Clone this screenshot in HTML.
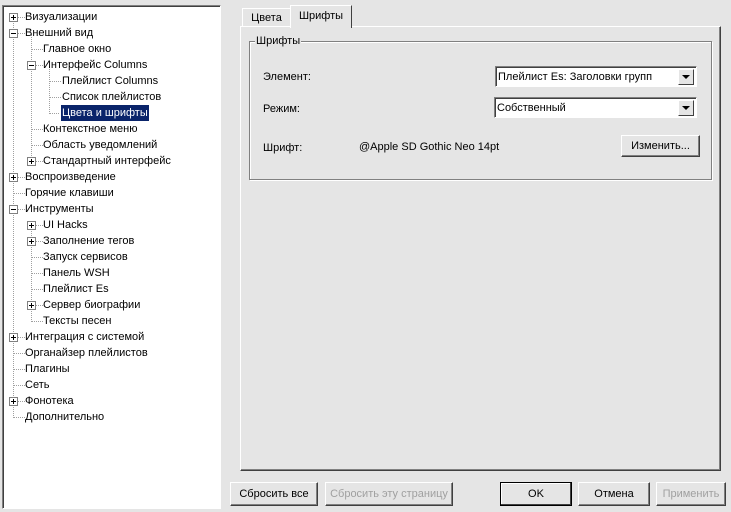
<!DOCTYPE html>
<html><head><meta charset="utf-8"><style>
*{margin:0;padding:0;box-sizing:border-box}
body{width:731px;height:512px;background:#e5e5e5;font:11px "Liberation Sans","DejaVu Sans",sans-serif;color:#000;position:relative;overflow:hidden}
.a{position:absolute;white-space:nowrap}
.tree{left:2px;top:5px;width:219px;height:504px;background:#fff;border:1px solid;border-color:#808080 #fff #fff #808080;box-shadow:inset 1px 1px 0 #404040}
.r{position:absolute;height:16px;line-height:16px}
.pb{position:absolute;width:9px;height:9px;border:1px solid #808080;background:#fff}
.pb:before{content:"";position:absolute;left:1px;top:3px;width:5px;height:1px;background:#000}
.pb.p:after{content:"";position:absolute;left:3px;top:1px;width:1px;height:5px;background:#000}
.v{position:absolute;width:1px;border-left:1px dotted #a0a0a0}
.h{position:absolute;height:1px;border-top:1px dotted #a0a0a0}
.btn{position:absolute;height:24px;border:1px solid;border-color:#fff #404040 #404040 #fff;box-shadow:inset -1px -1px 0 #808080;background:#e5e5e5;text-align:center;line-height:22px}
.dis{color:#a0a0a0}
.cb{position:absolute;height:21px;background:#fff;border:1px solid;border-color:#808080 #fff #fff #808080;box-shadow:inset 1px 1px 0 #404040;padding-left:2px;line-height:20px}
.arr{position:absolute;right:2px;top:2px;width:16px;height:16px;background:#e5e5e5;border:1px solid;border-color:#fff #404040 #404040 #fff}
.arr:after{content:"";position:absolute;left:3px;top:5px;border-left:4px solid transparent;border-right:4px solid transparent;border-top:4px solid #000}
</style></head><body>
<div class="a tree">
 <div class="v" style="left:10px;top:12px;height:400px"></div>
 <div class="v" style="left:28px;top:28px;height:128px"></div>
 <div class="v" style="left:46px;top:60px;height:48px"></div>
 <div class="v" style="left:28px;top:220px;height:96px"></div>
 <div class="h" style="left:10px;top:11px;width:12px"></div><div class="pb p" style="left:6px;top:7px"></div><div class="r" style="left:22px;top:3px">Визуализации</div>
 <div class="h" style="left:10px;top:27px;width:12px"></div><div class="pb" style="left:6px;top:23px"></div><div class="r" style="left:22px;top:19px">Внешний вид</div>
 <div class="h" style="left:28px;top:43px;width:12px"></div><div class="r" style="left:40px;top:35px">Главное окно</div>
 <div class="h" style="left:28px;top:59px;width:12px"></div><div class="pb" style="left:24px;top:55px"></div><div class="r" style="left:40px;top:51px">Интерфейс Columns</div>
 <div class="h" style="left:46px;top:75px;width:12px"></div><div class="r" style="left:59px;top:67px">Плейлист Columns</div>
 <div class="h" style="left:46px;top:91px;width:12px"></div><div class="r" style="left:59px;top:83px">Список плейлистов</div>
 <div class="h" style="left:46px;top:107px;width:12px"></div><div class="r" style="left:58px;top:99px;background:#0a246a;color:#fff;padding:0 1px;outline:1px dotted #fff">Цвета и шрифты</div>
 <div class="h" style="left:28px;top:123px;width:12px"></div><div class="r" style="left:40px;top:115px">Контекстное меню</div>
 <div class="h" style="left:28px;top:139px;width:12px"></div><div class="r" style="left:40px;top:131px">Область уведомлений</div>
 <div class="h" style="left:28px;top:155px;width:12px"></div><div class="pb p" style="left:24px;top:151px"></div><div class="r" style="left:40px;top:147px">Стандартный интерфейс</div>
 <div class="h" style="left:10px;top:171px;width:12px"></div><div class="pb p" style="left:6px;top:167px"></div><div class="r" style="left:22px;top:163px">Воспроизведение</div>
 <div class="h" style="left:10px;top:187px;width:12px"></div><div class="r" style="left:22px;top:179px">Горячие клавиши</div>
 <div class="h" style="left:10px;top:203px;width:12px"></div><div class="pb" style="left:6px;top:199px"></div><div class="r" style="left:22px;top:195px">Инструменты</div>
 <div class="h" style="left:28px;top:219px;width:12px"></div><div class="pb p" style="left:24px;top:215px"></div><div class="r" style="left:40px;top:211px">UI Hacks</div>
 <div class="h" style="left:28px;top:235px;width:12px"></div><div class="pb p" style="left:24px;top:231px"></div><div class="r" style="left:40px;top:227px">Заполнение тегов</div>
 <div class="h" style="left:28px;top:251px;width:12px"></div><div class="r" style="left:40px;top:243px">Запуск сервисов</div>
 <div class="h" style="left:28px;top:267px;width:12px"></div><div class="r" style="left:40px;top:259px">Панель WSH</div>
 <div class="h" style="left:28px;top:283px;width:12px"></div><div class="r" style="left:40px;top:275px">Плейлист Es</div>
 <div class="h" style="left:28px;top:299px;width:12px"></div><div class="pb p" style="left:24px;top:295px"></div><div class="r" style="left:40px;top:291px">Сервер биографии</div>
 <div class="h" style="left:28px;top:315px;width:12px"></div><div class="r" style="left:40px;top:307px">Тексты песен</div>
 <div class="h" style="left:10px;top:331px;width:12px"></div><div class="pb p" style="left:6px;top:327px"></div><div class="r" style="left:22px;top:323px">Интеграция с системой</div>
 <div class="h" style="left:10px;top:347px;width:12px"></div><div class="r" style="left:22px;top:339px">Органайзер плейлистов</div>
 <div class="h" style="left:10px;top:363px;width:12px"></div><div class="r" style="left:22px;top:355px">Плагины</div>
 <div class="h" style="left:10px;top:379px;width:12px"></div><div class="r" style="left:22px;top:371px">Сеть</div>
 <div class="h" style="left:10px;top:395px;width:12px"></div><div class="pb p" style="left:6px;top:391px"></div><div class="r" style="left:22px;top:387px">Фонотека</div>
 <div class="h" style="left:10px;top:411px;width:12px"></div><div class="r" style="left:22px;top:403px">Дополнительно</div>
</div>

<div class="a" style="left:240px;top:26px;width:481px;height:445px;border:1px solid;border-color:#fff #404040 #404040 #fff;box-shadow:inset -1px -1px 0 #808080"></div>
<div class="a" style="left:242px;top:8px;width:49px;height:19px;border:1px solid;border-color:#fff #808080 transparent #fff;border-bottom:none;text-align:center;line-height:19px">Цвета</div>
<div class="a" style="left:290px;top:5px;width:62px;height:23px;border:1px solid;border-color:#fff #404040 transparent #fff;border-bottom:none;background:#e5e5e5;text-align:center;line-height:20px">Шрифты</div>

<div class="a" style="left:249px;top:41px;width:463px;height:139px;border:1px solid #808080;box-shadow:1px 1px 0 #fff,inset 1px 1px 0 #fff"></div>
<div class="a" style="left:255px;top:35px;background:#e5e5e5;padding:0 1px;line-height:13px">Шрифты</div>

<div class="a" style="left:263px;top:71px">Элемент:</div>
<div class="cb" style="left:495px;top:66px;width:202px">Плейлист Es: Заголовки групп<div class="arr"></div></div>
<div class="a" style="left:263px;top:103px">Режим:</div>
<div class="cb" style="left:494px;top:97px;width:203px">Собственный<div class="arr"></div></div>
<div class="a" style="left:263px;top:142px">Шрифт:</div>
<div class="a" style="left:359px;top:141px">@Apple SD Gothic Neo 14pt</div>
<div class="btn" style="left:621px;top:135px;width:79px;height:22px;line-height:20px">Изменить...</div>

<div class="btn" style="left:230px;top:482px;width:88px">Сбросить все</div>
<div class="btn dis" style="left:325px;top:482px;width:128px">Сбросить эту страницу</div>
<div class="btn" style="left:500px;top:482px;width:72px;border:1px solid #000;box-shadow:inset -1px -1px 0 #404040,inset 1px 1px 0 #fff">OK</div>
<div class="btn" style="left:578px;top:482px;width:72px">Отмена</div>
<div class="btn dis" style="left:656px;top:482px;width:70px">Применить</div>
</body></html>
